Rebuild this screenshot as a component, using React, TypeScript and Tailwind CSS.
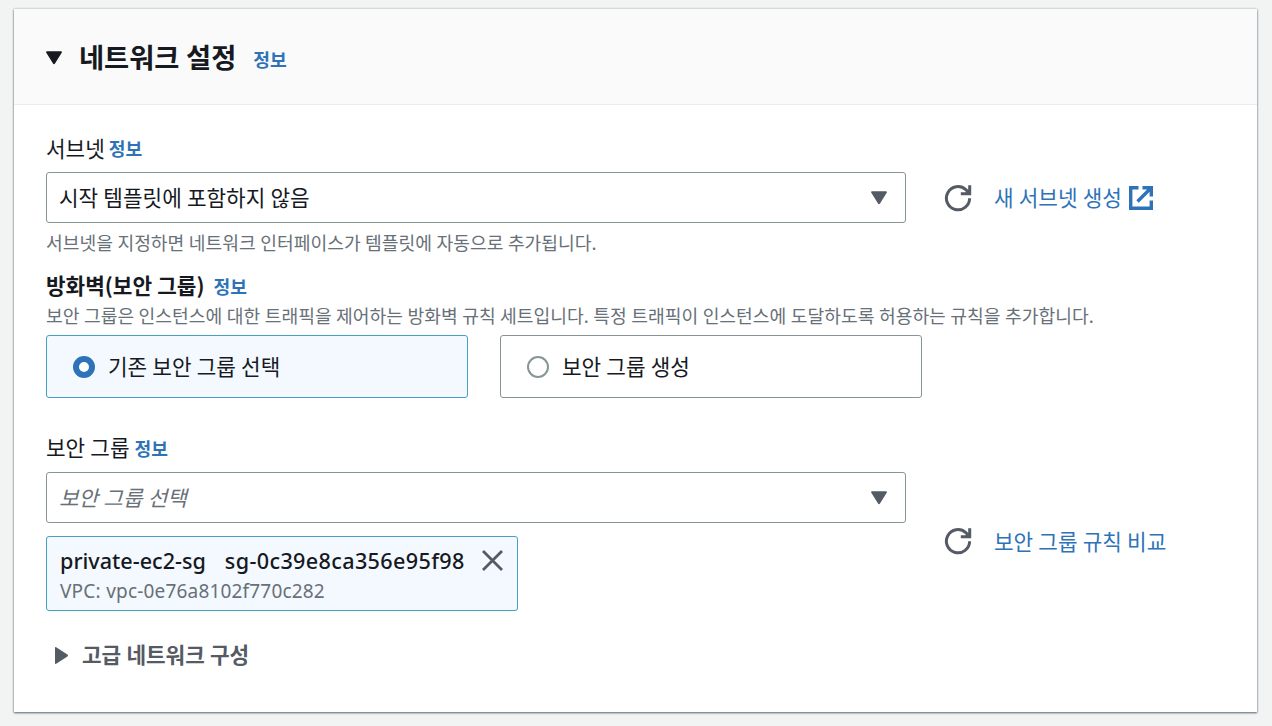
import type { ReactNode } from 'react'

function Info() {
  return (
    <a href="#" className="text-[18.2px] font-bold text-[#2e73b8]">
      정보
    </a>
  )
}

function CaretDown({ className }: { className?: string }) {
  return (
    <svg width="16" height="14" viewBox="0 0 16 14" fill="currentColor" className={className}>
      <path d="M1 .3h14c.9 0 1.2.9.7 1.5L9 12.6c-.5.8-1.5.8-2 0L.3 1.8C-.2 1.2.1.3 1 .3z" />
    </svg>
  )
}

function RefreshIcon() {
  return (
    <svg width="28" height="28" viewBox="0 0 28 28" fill="none" stroke="#545b64" strokeWidth="3">
      <path d="M25.6 14.2A11.6 11.6 0 1 1 21.8 5.6l2.6 2.6" />
      <path d="M25.7 1.2v8.6h-8.9" />
      <path d="M25.7 4.5v5.3h-5.3z" fill="#545b64" stroke="none" />
    </svg>
  )
}

function ExternalIcon() {
  return (
    <svg width="24" height="24" viewBox="0 0 24 24" fill="none" stroke="#2e73b8" strokeWidth="3.4">
      <path d="M9.5 1.7H1.7v20.6h20.6v-7.8" />
      <path d="M13.5 1.7h8.8v8.8M22 2L8.5 15.5" />
    </svg>
  )
}

function Select({ children }: { children: ReactNode }) {
  return (
    <div className="flex h-[51px] w-[860px] items-center justify-between rounded-[3px] border border-[#879596] bg-white pr-[18px] pl-3 text-[21.3px]">
      {children}
      <CaretDown className="text-[#545b64]" />
    </div>
  )
}

function RadioTile({ label, checked = false }: { label: string; checked?: boolean }) {
  return (
    <div
      className={`flex h-[63px] w-[422px] items-center gap-[13px] rounded-[3px] border pl-[26px] text-[21.3px] ${
        checked ? 'border-[#45a0c2] bg-[#f3f9fe]' : 'border-[#879596] bg-white'
      }`}
    >
      <span
        className={`size-[22px] rounded-full bg-white ${
          checked ? 'border-[6.5px] border-[#2e73b8]' : 'border-2 border-[#879596]'
        }`}
      />
      <span className="pb-0.5">{label}</span>
    </div>
  )
}

export default function App() {
  return (
    <div className="h-[726px] w-[1272px] overflow-hidden bg-[#f2f3f3] pt-[9px] pl-[14px] font-['Noto_Sans_CJK_KR',sans-serif] leading-none whitespace-nowrap text-[#16191f] [word-spacing:0.4px]">
      <section className="h-[703px] w-[1243px] bg-white shadow-[0_1px_2px_#5f6b7a,0_0_2px_#aab7b8]">
        <header className="flex h-24 items-center border-b border-[#eaeded] bg-[#fafafa] pl-8">
          <CaretDown className="mt-0.5" />
          <h2 className="ml-[17px] text-[27.3px] font-bold">네트워크 설정</h2>
          <div className="mt-1.5 ml-[17px]">
            <Info />
          </div>
        </header>

        <div className="flex flex-col pt-[27px] pl-8">
          <div className="flex h-8 items-center gap-1 text-[21.3px]">
            <label className="pb-px">서브넷</label>
            <Info />
          </div>
          <div className="mt-2 flex items-center">
            <Select>
              <span className="pb-0.5">시작 템플릿에 포함하지 않음</span>
            </Select>
            <button className="ml-[38px]">
              <RefreshIcon />
            </button>
            <a href="#" className="ml-[22px] flex items-center gap-[7px] text-[21.3px] text-[#2e73b8]">
              <span className="pb-0.5">새 서브넷 생성</span>
              <ExternalIcon />
            </a>
          </div>
          <p className="flex h-[38px] items-center text-[18.2px] text-[#687078]">
            서브넷을 지정하면 네트워크 인터페이스가 템플릿에 자동으로 추가됩니다.
          </p>

          <div className="mt-[7px] flex h-9 items-center gap-2.5 text-[21.3px]">
            <h3 className="-mr-px pb-0.5 font-bold">방화벽(보안 그룹)</h3>
            <Info />
          </div>
          <p className="flex h-[22px] items-center text-[18.2px] text-[#687078]">
            보안 그룹은 인스턴스에 대한 트래픽을 제어하는 방화벽 규칙 세트입니다. 특정 트래픽이 인스턴스에 도달하도록 허용하는 규칙을 추가합니다.
          </p>
          <div className="mt-[9px] flex gap-8">
            <RadioTile label="기존 보안 그룹 선택" checked />
            <RadioTile label="보안 그룹 생성" />
          </div>

          <div className="mt-[34px] flex h-8 items-center gap-[5px] text-[21.3px]">
            <label className="pb-0.5">보안 그룹</label>
            <Info />
          </div>
          <div className="mt-2 flex items-center">
            <div>
              <Select>
                <span className="pb-0.5 text-[#687078] italic">보안 그룹 선택</span>
              </Select>
              <div className="mt-[13px] flex h-[75px] w-[472px] justify-between rounded-[3px] border border-[#45a0c2] bg-[#f3f9fe] pr-[14px] pl-[13px] font-['Noto_Sans',sans-serif]">
                <div className="pt-3">
                  <div className="flex gap-[19px] text-[21.6px] leading-6 font-medium">
                    <span>private-ec2-sg</span>
                    <span className="tracking-[0.35px]">sg-0c39e8ca356e95f98</span>
                  </div>
                  <div className="mt-1.5 text-[19px] leading-6 tracking-[0.18px] text-[#687078]">VPC: vpc-0e76a8102f770c282</div>
                </div>
                <svg width="21" height="21" viewBox="0 0 21 21" stroke="#545b64" strokeWidth="2.8" className="mt-[13px]">
                  <path d="M1 1l19 19M20 1L1 20" />
                </svg>
              </div>
            </div>
            <button className="mb-0.5 ml-[38px]">
              <RefreshIcon />
            </button>
            <a href="#" className="ml-[22px] pb-0.5 text-[21.3px] text-[#2e73b8]">
              보안 그룹 규칙 비교
            </a>
          </div>

          <div className="mt-7 flex h-8 items-center text-[21.3px] font-bold text-[#545b64]">
            <svg width="13" height="17" viewBox="0 0 13 17" fill="currentColor" className="ml-[9px]">
              <path d="M0 .8v15.4c0 .7.6 1 1.2.6l11.2-7.3c.8-.5.8-1.5 0-2L1.2.2C.6-.2 0 .1 0 .8z" />
            </svg>
            <span className="ml-3.5 pb-0.5">고급 네트워크 구성</span>
          </div>
        </div>
      </section>
    </div>
  )
}
